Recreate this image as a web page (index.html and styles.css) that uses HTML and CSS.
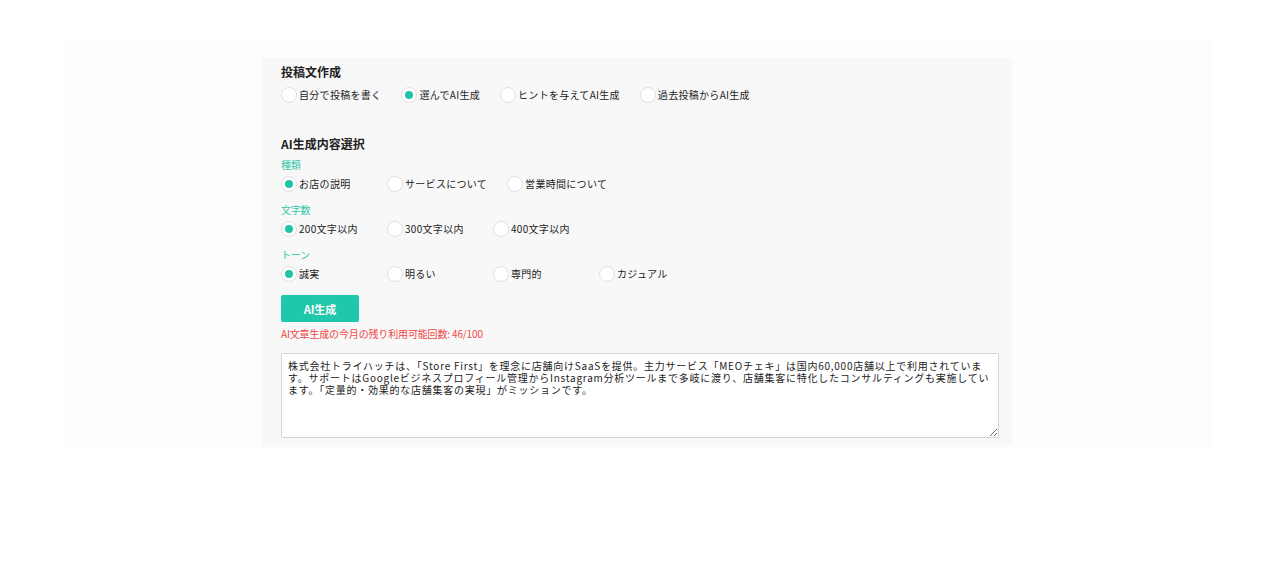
FILE: index.html
```html
<!DOCTYPE html>
<html lang="ja">
<head>
<meta charset="utf-8">
<title>投稿文作成</title>
<link rel="stylesheet" href="styles.css">
</head>
<body>
<div class="outer">
  <div class="panel">
    <h2 class="title">投稿文作成</h2>
    <div class="opts">
      <label class="opt"><span class="radio"></span><span class="txt">自分で投稿を書く</span></label>
      <label class="opt"><span class="radio on"></span><span class="txt">選んでAI生成</span></label>
      <label class="opt"><span class="radio"></span><span class="txt">ヒントを与えてAI生成</span></label>
      <label class="opt"><span class="radio"></span><span class="txt">過去投稿からAI生成</span></label>
    </div>

    <h2 class="title sec">AI生成内容選択</h2>
    <div class="sub">種類</div>
    <div class="opts fixed">
      <label class="opt"><span class="radio on"></span><span class="txt">お店の説明</span></label>
      <label class="opt"><span class="radio"></span><span class="txt">サービスについて</span></label>
      <label class="opt"><span class="radio"></span><span class="txt">営業時間について</span></label>
    </div>
    <div class="sub gap">文字数</div>
    <div class="opts fixed">
      <label class="opt"><span class="radio on"></span><span class="txt">200文字以内</span></label>
      <label class="opt"><span class="radio"></span><span class="txt">300文字以内</span></label>
      <label class="opt"><span class="radio"></span><span class="txt">400文字以内</span></label>
    </div>
    <div class="sub gap">トーン</div>
    <div class="opts fixed">
      <label class="opt"><span class="radio on"></span><span class="txt">誠実</span></label>
      <label class="opt"><span class="radio"></span><span class="txt">明るい</span></label>
      <label class="opt"><span class="radio"></span><span class="txt">専門的</span></label>
      <label class="opt"><span class="radio"></span><span class="txt">カジュアル</span></label>
    </div>

    <button class="gen">AI生成</button>
    <p class="remain">AI文章生成の今月の残り利用可能回数: 46/100</p>

    <textarea class="result">株式会社トライハッチは、「Store First」を理念に店舗向けSaaSを提供。主力サービス「MEOチェキ」は国内60,000店舗以上で利用されています。サポートはGoogleビジネスプロフィール管理からInstagram分析ツールまで多岐に渡り、店舗集客に特化したコンサルティングも実施しています。「定量的・効果的な店舗集客の実現」がミッションです。</textarea>
  </div>
</div>
</body>
</html>
```

FILE: styles.css
```css
* { box-sizing: border-box; }
html, body {
  margin: 0;
  padding: 0;
  background: #ffffff;
}
body {
  font-family: "Noto Sans CJK JP", "Noto Sans", sans-serif;
  color: #222222;
}
.outer {
  margin: 40px 62px 0;
  padding: 18px 200px 3px;
  background: #fdfdfd;
}
.panel {
  width: 750px;
  background: #f8f8f8;
  padding: 5px 13px 7px 19px;
  display: flex;
  flex-direction: column;
  align-items: flex-start;
}
.title {
  margin: 0;
  font-size: 12px;
  line-height: 18px;
  font-weight: 700;
  color: #222222;
}
.title.sec { margin-top: 32px; }
.opts {
  display: flex;
  margin-top: 6px;
}
.opt {
  display: flex;
  align-items: center;
  gap: 2px;
  margin-right: 20px;
  height: 16px;
}
.opts.fixed { margin-top: 4px; }
.opts.fixed .opt { min-width: 86px; }
.radio {
  width: 16px;
  height: 16px;
  border-radius: 50%;
  background: #ffffff;
  border: 1px solid #e0e0e0;
  display: flex;
  align-items: center;
  justify-content: center;
  flex: none;
}
.radio.on::after {
  content: "";
  width: 8px;
  height: 8px;
  border-radius: 50%;
  background: #1fc4a6;
}
.txt {
  font-size: 10px;
  font-weight: 400;
  letter-spacing: 0.3px;
  line-height: 16px;
  color: #1c1c1c;
  white-space: nowrap;
}
.sub {
  margin-top: 5px;
  font-size: 10px;
  line-height: 14px;
  letter-spacing: -0.3px;
  color: #2ec7a9;
}
.sub.gap { margin-top: 11px; }
.gen {
  margin-top: 13px;
  width: 78px;
  height: 27px;
  border: none;
  border-radius: 2px;
  background: #1fc8aa;
  color: #ffffff;
  font-family: inherit;
  font-size: 11px;
  font-weight: 700;
  padding: 0;
}
.remain {
  margin: 5px 0 0;
  font-size: 10px;
  line-height: 14px;
  letter-spacing: -0.15px;
  color: #f04646;
}
.result {
  margin-top: 12px;
  width: 718px;
  height: 85px;
  border: 1px solid #d4d4d4;
  border-radius: 2px;
  background: #ffffff;
  padding: 6px 6px;
  font-family: inherit;
  font-size: 10px;
  font-weight: 400;
  line-height: 12px;
  letter-spacing: 0.75px;
  color: #1c1c1c;
  resize: vertical;
}
```
